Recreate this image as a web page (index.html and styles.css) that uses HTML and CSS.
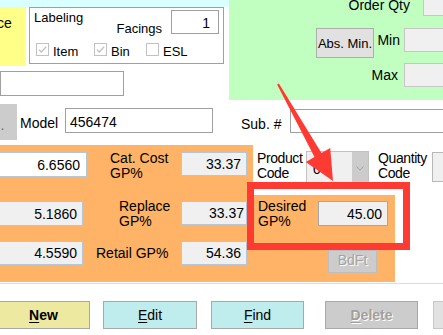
FILE: index.html
```html
<!DOCTYPE html>
<html>
<head>
<meta charset="utf-8">
<title>Item pricing</title>
<link rel="stylesheet" href="styles.css">
</head>
<body>
<div class="form">
  <div class="top">
    <div class="left-col">
      <div class="cyan"></div>
      <div class="left-row">
        <div class="yellow"><span class="yellow-text">ce</span></div>
        <div class="labeling">
          <div class="lab-head">
            <span class="lab-title">Labeling</span>
            <span class="facings-label">Facings</span>
            <div class="field facings">1</div>
          </div>
          <div class="checks">
            <div class="chk chk-item">
              <svg class="box" width="13" height="13" viewBox="0 0 13 13"><rect x="0.5" y="0.5" width="12" height="12" fill="#fff" stroke="#c2c2c2"/><path d="M2.8 6.6 L5.2 9 L10.2 3.8" fill="none" stroke="#c2c2c2" stroke-width="1.3"/></svg>
              <span>Item</span>
            </div>
            <div class="chk chk-bin">
              <svg class="box" width="13" height="13" viewBox="0 0 13 13"><rect x="0.5" y="0.5" width="12" height="12" fill="#fff" stroke="#c2c2c2"/><path d="M2.8 6.6 L5.2 9 L10.2 3.8" fill="none" stroke="#c2c2c2" stroke-width="1.3"/></svg>
              <span>Bin</span>
            </div>
            <div class="chk chk-esl">
              <svg class="box" width="13" height="13" viewBox="0 0 13 13"><rect x="0.5" y="0.5" width="12" height="12" fill="#fff" stroke="#c2c2c2"/></svg>
              <span>ESL</span>
            </div>
          </div>
        </div>
      </div>
      <div class="field blank-wide"></div>
    </div>
    <div class="green">
      <div class="g-row g-r1">
        <span class="g-label">Order Qty</span>
        <div class="field gfield"></div>
      </div>
      <div class="g-row g-r2">
        <div class="absmin">Abs. Min.</div>
        <span class="g-label">Min</span>
        <div class="field gfield"></div>
      </div>
      <div class="g-row g-r3">
        <span class="g-label">Max</span>
        <div class="field gfield"></div>
      </div>
    </div>
  </div>

  <div class="model-row">
    <div class="dots-btn">...</div>
    <span class="model-label">Model</span>
    <div class="field model">456474</div>
    <span class="sub-label">Sub. #</span>
    <div class="field sub"></div>
  </div>

  <div class="pricing">
    <div class="orange-left">
      <div class="o-row o-row1">
        <div class="field o-in white w97">6.6560</div>
        <span class="o-label">Cat. Cost<br>GP%</span>
        <div class="field o-gp">33.37</div>
      </div>
      <div class="o-row o-row2">
        <div class="field o-in w93">5.1860</div>
        <span class="o-label">Replace<br>GP%</span>
        <div class="field o-gp tight">33.37</div>
      </div>
      <div class="o-row o-row3">
        <div class="field o-in w93 short">4.5590</div>
        <span class="o-label">Retail GP%</span>
        <div class="field o-gp">54.36</div>
      </div>
    </div>
    <div class="pricing-right">
      <div class="codes">
        <span class="code-label pc-label">Product<br>Code</span>
        <div class="combo">
          <div class="combo-text">0</div>
          <div class="combo-btn">
            <svg width="8" height="5" viewBox="0 0 8 5"><path d="M0.5 0.5 L4 4 L7.5 0.5" fill="none" stroke="#a6a6a6" stroke-width="1"/></svg>
          </div>
        </div>
        <span class="code-label qc-label">Quantity<br>Code</span>
        <div class="field qc-field"></div>
      </div>
      <div class="desired-wrap">
        <div class="desired">
          <div class="d-row">
            <span class="d-label">Desired<br>GP%</span>
            <div class="field d-in">45.00</div>
          </div>
          <div class="bdft">BdFt</div>
        </div>
      </div>
    </div>
  </div>

  <div class="divider"></div>

  <div class="buttons">
    <div class="btn btn-new"><span><u>N</u>ew</span></div>
    <div class="btn btn-edit"><span><u>E</u>dit</span></div>
    <div class="btn btn-find"><span><u>F</u>ind</span></div>
    <div class="btn btn-delete"><span><u>D</u>elete</span></div>
    <div class="btn btn-next"></div>
  </div>

  <div class="highlight"></div>
  <svg class="arrow" width="443" height="335" viewBox="0 0 443 335">
    <polygon points="277.1,84.6 314.5,157 305.8,162 333,181 330.2,148 321.5,153 278.9,83.4" fill="#fe3b33"/>
  </svg>
</div>
</body>
</html>
```

FILE: styles.css
```css
* { box-sizing: border-box; }
html, body { margin: 0; padding: 0; background: #fff; }

.form {
  position: relative;
  width: 443px;
  height: 335px;
  overflow: hidden;
  font-family: "Liberation Sans", Arial, sans-serif;
  font-size: 14px;
  line-height: 16px;
  color: #000;
  background: #fff;
}

.field {
  display: flex;
  align-items: center;
  flex: none;
  white-space: nowrap;
  overflow: hidden;
  border: 1px solid #a0a0a0;
  background: #fff;
}

/* ---------- top band ---------- */
.top { display: flex; height: 100px; }
.left-col { width: 229px; flex: none; }
.cyan { height: 7px; background: #d9ffff; }
.left-row { display: flex; height: 59px; }
.yellow {
  width: 26px; height: 59px; flex: none;
  background: #ffff88;
  padding-top: 8px;
  overflow: hidden;
  white-space: nowrap;
}
.yellow-text { display: block; margin-left: -3px; }

.labeling {
  width: 195px; height: 57px; flex: none;
  margin-left: 3px;
  border: 1px solid #a0a0a0;
  font-size: 13px;
  line-height: 15px;
}
.lab-head { display: flex; align-items: flex-start; height: 26px; }
.lab-title { margin-left: 4px; margin-top: 1.5px; }
.facings-label { margin-left: auto; margin-top: 13px; }
.facings {
  width: 48px; height: 24px;
  margin-top: 2px; margin-left: 9px; margin-right: 4px;
  justify-content: flex-end;
  padding-right: 8px; padding-top: 2px;
  font-size: 14px; line-height: 16px;
}
.checks { display: flex; margin-top: 9px; padding-left: 6px; }
.chk { display: flex; align-items: flex-start; flex: none; }
.chk .box { display: block; flex: none; }
.chk span { margin-left: 4px; margin-top: 1px; }
.chk-item { width: 58px; }
.chk-bin { width: 52px; }

.blank-wide { width: 124px; height: 25px; margin-top: 5px; }

.green {
  width: 214px; flex: none; height: 100px;
  background: #c0ffc0;
  overflow: hidden;
}
.g-row { display: flex; align-items: flex-start; }
.g-label { flex: none; text-align: right; white-space: nowrap; }
.gfield { width: 60px; background: #f0f0f0; border-color: #c6c6c6; }
.g-r1 { margin-top: -9px; height: 25px; }
.g-r1 .g-label { width: 181px; margin-top: 6px; }
.g-r1 .gfield { margin-left: 13px; height: 25px; }
.g-r2 { margin-top: 12px; height: 30px; }
.absmin {
  flex: none;
  margin-left: 87px;
  width: 58px; height: 30px;
  background: #e1e1e1;
  border: 1px solid #adadad;
  font-size: 13px;
  display: flex; align-items: center; justify-content: center;
  padding-top: 2px;
  white-space: nowrap;
}
.g-r2 .g-label { width: 26px; margin-top: 4px; }
.g-r2 .gfield { margin-left: 4px; height: 24px; }
.g-r3 { margin-top: 5px; }
.g-r3 .g-label { width: 169px; margin-top: 4px; }
.g-r3 .gfield { margin-left: 6px; height: 24px; }

/* ---------- model row ---------- */
.model-row { display: flex; align-items: flex-start; height: 45px; }
.dots-btn {
  flex: none;
  margin-left: -20px;
  width: 37px; height: 36px;
  margin-top: 4px;
  background: #cccccc;
  color: #6d6d6d;
  display: flex; align-items: center; justify-content: center;
  padding-top: 6px;
}
.model-label { flex: none; width: 48px; padding-left: 3px; margin-top: 15px; }
.model { width: 148px; height: 25px; margin-top: 8px; padding-left: 4px; padding-top: 2px; }
.sub-label { flex: none; width: 77px; padding-left: 28px; margin-top: 16px; white-space: nowrap; }
.sub { width: 160px; height: 24px; margin-top: 9px; }

/* ---------- pricing ---------- */
.pricing { display: flex; height: 137px; }
.orange-left {
  width: 253px; flex: none;
  background: #ffb366;
  padding-top: 7px;
}
.o-row { display: flex; align-items: flex-start; height: 25px; }
.o-row2 { margin-top: 24px; }
.o-row3 { margin-top: 15px; height: 24px; }
.o-label { flex: none; line-height: 15px; white-space: nowrap; }
.o-in {
  height: 25px;
  margin-left: -10px;
  background: #f0f0f0;
  border-color: #b4c6da;
  justify-content: flex-end;
  padding-right: 5px;
  padding-top: 1px;
}
.o-in.white { background: #fff; padding-right: 6px; }
.w97 { width: 97px; }
.w93 { width: 93px; }
.o-in.short { height: 24px; padding-top: 0; }
.o-row1 .o-label { width: 94px; padding-left: 23px; margin-top: -1px; }
.o-row2 .o-label { width: 98px; padding-left: 36px; margin-top: -2.5px; }
.o-row3 .o-label { width: 98px; padding-left: 13px; margin-top: 4.5px; }
.o-gp {
  width: 66px; height: 24px;
  background: #f0f0f0;
  border-color: #b4c6da;
  justify-content: flex-end;
  padding-right: 5px;
}
.o-gp.tight { padding-right: 2px; }

.pricing-right { width: 190px; flex: none; }
.codes { height: 50px; display: flex; align-items: flex-start; }
.code-label { flex: none; line-height: 15px; margin-top: 6px; white-space: nowrap; letter-spacing: -0.4px; }
.pc-label { width: 53px; padding-left: 4px; }
.combo {
  flex: none;
  width: 63px; height: 32px;
  margin-top: 6px;
  border: 1px solid #c2c2c2;
  background: #f0f0f0;
  display: flex;
}
.combo-text { flex: 1; display: flex; align-items: center; padding-left: 6px; padding-top: 4px; }
.combo-btn {
  width: 16px; flex: none;
  background: #cccccc;
  display: flex; align-items: center; justify-content: center;
  padding-top: 2px;
}
.combo-btn svg { display: block; }
.qc-label { width: 54px; margin-left: 9px; }
.qc-field { width: 30px; height: 30px; margin-top: 7px; background: #f0f0f0; border-color: #b8b8b8; }

.desired-wrap { height: 87px; display: flex; }
.desired { width: 142px; flex: none; background: #ffb366; }
.d-row { display: flex; align-items: flex-start; height: 31px; }
.d-label { flex: none; width: 65px; padding-left: 5px; margin-top: 3.5px; line-height: 15px; white-space: nowrap; }
.d-in {
  width: 70px; height: 25px;
  margin-top: 6px;
  background: #f0f0f0;
  border-color: #a6a6a6;
  justify-content: flex-end;
  padding-right: 5px;
  padding-top: 1px;
}
.bdft {
  margin-left: 75px;
  margin-top: 24px;
  width: 49px; height: 23px;
  background: #cccccc;
  border: 1px solid #bdbdbd;
  color: #a3a3a3;
  text-shadow: 1px 1px 0 #fff;
  display: flex; align-items: center; justify-content: center;
  padding-bottom: 4px;
}

/* ---------- bottom buttons ---------- */
.divider { height: 1px; margin-top: 1px; background: #dcdcdc; }
.buttons { display: flex; height: 28px; margin-top: 17px; }
.btn {
  flex: none;
  height: 28px;
  border: 1px solid #a8a8a8;
  display: flex; align-items: center; justify-content: center;
  white-space: nowrap;
}
.btn u { text-decoration-thickness: 1px; text-underline-offset: 2px; }
.btn-new { margin-left: -3px; width: 93px; background: #eee9a0; font-weight: bold; }
.btn-edit { margin-left: 13px; width: 94px; background: #bfecec; }
.btn-find { margin-left: 14px; width: 93px; background: #bfecec; }
.btn-delete {
  margin-left: 21px; width: 93px;
  background: #cccccc;
  font-weight: bold;
  color: #a0a0a0;
  text-shadow: 1px 1px 0 #fff;
}
.btn-next { margin-left: 15px; width: 60px; background: #e1e1e1; border-color: #c6c6c6; }

/* ---------- annotation overlay ---------- */
.highlight {
  position: absolute;
  left: 247px; top: 182px;
  width: 163px; height: 68px;
  border: 7px solid #fe3b33;
}
.arrow {
  position: absolute;
  left: 0; top: 0;
  pointer-events: none;
}
```
